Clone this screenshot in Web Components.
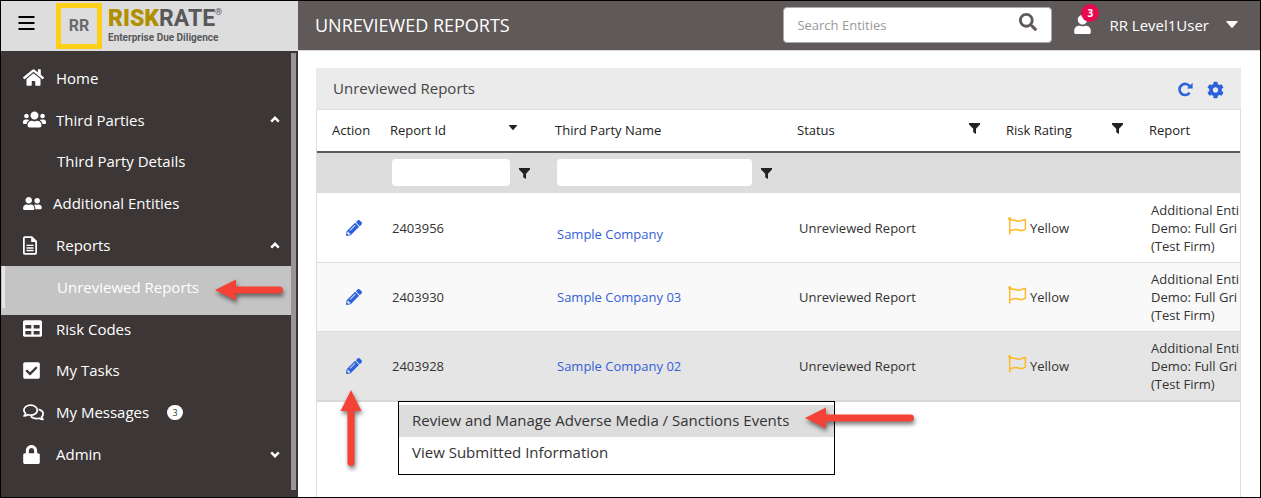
<!DOCTYPE html>
<html lang="en">
<head>
<meta charset="utf-8">
<title>RiskRate – Unreviewed Reports</title>
<style>
html, body { height: 100%; }
body { margin: 0; font-family: "Open Sans", "Noto Sans", sans-serif; font-size: 13px; color: #333; background: #fff; }
</style>
</head>
<body>
<rr-app></rr-app>
<script>
const ICONS = {
  bars: ['0 0 16 14', '<path d="M0 0h16v2H0zM0 6h16v2H0zM0 12h16v2H0z"/>'],
  home: ['0 0 576 512', '<path d="M280.37 148.26L96 300.11V464a16 16 0 0 0 16 16l112.06-.29a16 16 0 0 0 15.92-16V368a16 16 0 0 1 16-16h64a16 16 0 0 1 16 16v95.64a16 16 0 0 0 16 16.05L464 480a16 16 0 0 0 16-16V300L295.67 148.26a12.19 12.19 0 0 0-15.3 0zM571.6 251.47L488 182.56V44.05a12 12 0 0 0-12-12h-56a12 12 0 0 0-12 12v72.61L318.47 43a48 48 0 0 0-61 0L4.34 251.47a12 12 0 0 0-1.6 16.9l25.5 31A12 12 0 0 0 45.15 301l235.22-193.74a12.19 12.19 0 0 1 15.3 0L530.9 301a12 12 0 0 0 16.9-1.6l25.5-31a12 12 0 0 0-1.7-16.93z"/>'],
  users: ['0 0 640 512', '<path d="M96 224c35.3 0 64-28.7 64-64s-28.7-64-64-64-64 28.7-64 64 28.7 64 64 64zm448 0c35.3 0 64-28.7 64-64s-28.7-64-64-64-64 28.7-64 64 28.7 64 64 64zm32 32h-64c-17.6 0-33.5 7.1-45.1 18.6 40.3 22.1 68.9 62 75.1 109.4h66c17.7 0 32-14.3 32-32v-32c0-35.3-28.7-64-64-64zm-256 0c61.9 0 112-50.1 112-112S381.9 32 320 32 208 82.1 208 144s50.1 112 112 112zm76.8 32h-8.3c-20.8 10-43.9 16-68.5 16s-47.6-6-68.5-16h-8.3C179.6 288 128 339.6 128 403.2V432c0 26.5 21.5 48 48 48h288c26.5 0 48-21.5 48-48v-28.8c0-63.6-51.6-115.2-115.2-115.2zm-223.7-13.4C161.5 263.1 145.6 256 128 256H64c-35.3 0-64 28.7-64 64v32c0 17.7 14.3 32 32 32h65.9c6.3-47.4 34.9-87.3 75.2-109.4z"/>'],
  friends: ['0 0 640 512', '<path d="M192 256c61.9 0 112-50.1 112-112S253.9 32 192 32 80 82.1 80 144s50.1 112 112 112zm76.8 32h-8.3c-20.8 10-43.9 16-68.5 16s-47.6-6-68.5-16h-8.3C51.6 288 0 339.6 0 403.2V432c0 26.5 21.5 48 48 48h288c26.5 0 48-21.5 48-48v-28.8c0-63.6-51.6-115.2-115.2-115.2zM480 256c53 0 96-43 96-96s-43-96-96-96-96 43-96 96 43 96 96 96zm48 32h-3.8c-13.9 4.8-28.6 8-44.2 8s-30.3-3.2-44.2-8H432c-20.4 0-39.2 5.9-55.7 15.4 24.4 26.3 39.7 61.2 39.7 99.8v38.4c0 2.2-.5 4.3-.6 6.4H592c26.5 0 48-21.5 48-48 0-61.9-50.1-112-112-112z"/>'],
  file: ['0 0 384 512', '<path d="M24 48q0-24 24-24H240L360 144V464q0 24-24 24H48q-24 0-24-24z" fill="none" stroke="currentColor" stroke-width="48"/><path d="M224 24v136h136v-30L250 20zM96 232h192v40H96zM96 302h192v40H96zM96 372h192v40H96z"/>'],
  table: ['0 0 512 512', '<path d="M464 32H48C21.49 32 0 53.49 0 80v352c0 26.51 21.49 48 48 48h416c26.51 0 48-21.49 48-48V80c0-26.51-21.49-48-48-48zM224 416H64v-96h160v96zm0-160H64v-96h160v96zm224 160H288v-96h160v96zm0-160H288v-96h160v96z"/>'],
  check: ['0 0 448 512', '<path d="M400 480H48c-26.51 0-48-21.49-48-48V80c0-26.51 21.49-48 48-48h352c26.51 0 48 21.49 48 48v352c0 26.51-21.49 48-48 48zm-204.686-98.059l184-184c6.248-6.248 6.248-16.379 0-22.627l-22.627-22.627c-6.248-6.248-16.379-6.249-22.628 0L184 302.745l-70.059-70.059c-6.248-6.248-16.379-6.248-22.628 0l-22.627 22.627c-6.248 6.248-6.248 16.379 0 22.627l104 104c6.249 6.25 16.379 6.25 22.628.001z"/>'],
  chats: ['0 0 576 512', '<g fill="none" stroke="currentColor" stroke-width="48" stroke-linejoin="round"><path d="M208 56c102 0 184 60 184 136s-82 136-184 136c-25 0-49-4-71-11-24 16-58 35-109 35 20-20 36-45 43-70-29-25-47-56-47-90C24 116 106 56 208 56z"/><path d="M430 172c70 20 122 68 122 124 0 32-16 62-44 86 8 26 24 48 42 66-48 0-82-18-106-34-22 6-46 10-70 10-68 0-128-26-160-66"/></g>'],
  lock: ['0 0 448 512', '<path d="M400 224h-24v-72C376 68.2 307.8 0 224 0S72 68.2 72 152v72H48c-26.5 0-48 21.5-48 48v192c0 26.5 21.5 48 48 48h352c26.5 0 48-21.5 48-48V272c0-26.5-21.5-48-48-48zm-104 0H152v-72c0-39.7 32.3-72 72-72s72 32.3 72 72v72z"/>'],
  search: ['0 0 512 512', '<path d="M505 442.7L405.3 343c-4.5-4.5-10.6-7-17-7H372c27.6-35.3 44-79.7 44-128C416 93.1 322.9 0 208 0S0 93.1 0 208s93.1 208 208 208c48.3 0 92.7-16.4 128-44v16.3c0 6.4 2.5 12.5 7 17l99.7 99.7c9.4 9.4 24.6 9.4 33.9 0l28.3-28.3c9.4-9.4 9.4-24.6.1-34zM208 336c-70.7 0-128-57.2-128-128 0-70.7 57.2-128 128-128 70.7 0 128 57.2 128 128 0 70.7-57.2 128-128 128z"/>'],
  user: ['0 0 448 512', '<path d="M224 256c70.7 0 128-57.3 128-128S294.7 0 224 0 96 57.3 96 128s57.3 128 128 128zm89.6 32h-16.7c-22.2 10.2-46.9 16-72.9 16s-50.6-5.8-72.9-16h-16.7C60.2 288 0 348.2 0 422.4V464c0 26.5 21.5 48 48 48h352c26.5 0 48-21.5 48-48v-41.6c0-74.2-60.2-134.4-134.4-134.4z"/>'],
  cog: ['0 0 512 512', '<path d="M487.4 315.7l-42.6-24.6c4.3-23.2 4.3-47 0-70.2l42.6-24.6c4.9-2.8 7.1-8.6 5.5-14-11.1-35.6-30-67.8-54.7-94.6-3.8-4.1-10-5.1-14.8-2.3L380.8 110c-17.9-15.4-38.5-27.3-60.8-35.1V25.8c0-5.6-3.9-10.5-9.4-11.7-36.7-8.2-74.3-7.8-109.2 0-5.5 1.2-9.4 6.1-9.4 11.7V75c-22.2 7.9-42.8 19.8-60.8 35.1L88.7 85.5c-4.9-2.8-11-1.9-14.8 2.3-24.7 26.7-43.6 58.9-54.7 94.6-1.7 5.4.6 11.2 5.5 14L67.3 221c-4.3 23.2-4.3 47 0 70.2l-42.6 24.6c-4.9 2.8-7.1 8.6-5.5 14 11.1 35.6 30 67.8 54.7 94.6 3.8 4.1 10 5.1 14.8 2.3l42.6-24.6c17.9 15.4 38.5 27.3 60.8 35.1v49.2c0 5.6 3.9 10.5 9.4 11.7 36.7 8.2 74.3 7.8 109.2 0 5.5-1.2 9.4-6.1 9.4-11.7v-49.2c22.2-7.9 42.8-19.8 60.8-35.1l42.6 24.6c4.9 2.8 11 1.9 14.8-2.3 24.7-26.7 43.6-58.9 54.7-94.6 1.5-5.5-.7-11.3-5.6-14.1zM256 336c-44.1 0-80-35.9-80-80s35.9-80 80-80 80 35.9 80 80-35.9 80-80 80z"/>'],
  redo: ['0 0 15 15', '<path d="M11.6 10.8A5.6 5.6 0 1 1 11.8 4.4" fill="none" stroke="currentColor" stroke-width="2.6"/><path d="M14.6 0.8V6.6H8.8z"/>'],
  pencil: ['0 0 512 512', '<path d="M497.9 142.1l-46.1 46.1c-4.7 4.7-12.3 4.7-17 0l-111-111c-4.7-4.7-4.7-12.3 0-17l46.1-46.1c18.7-18.7 49.1-18.7 67.9 0l60.1 60.1c18.8 18.7 18.8 49.1 0 67.900zM284.2 99.8L21.6 362.4.4 483.9c-2.9 16.4 11.4 30.6 27.8 27.8l121.5-21.3 262.6-262.6c4.7-4.7 4.7-12.3 0-17l-111-111c-4.8-4.7-12.4-4.7-17.1 0zM124.1 339.9c-5.5-5.5-5.5-14.3 0-19.8l154-154c5.5-5.5 14.3-5.5 19.8 0s5.5 14.3 0 19.8l-154 154c-5.5 5.5-14.3 5.5-19.8 0zM88 424h48v36.3l-64.5 11.3-31.1-31.1L51.7 376H88v48z"/>'],
  filter: ['0 0 11 11', '<path d="M0 0h11v1.5L7 5.8V11L4.2 9.2V5.8L0 1.5z"/>'],
  caret: ['0 0 10 6', '<path d="M.6 0h8.8q.9 0 .3.8L5.6 5.6q-.6.6-1.2 0L.3.8Q-.3 0 .6 0z"/>'],
  up: ['0 0 10 7', '<path d="M1.2 5.6L5 1.8l3.8 3.8" fill="none" stroke="currentColor" stroke-width="2.4"/>'],
  down: ['0 0 10 7', '<path d="M1.2 1.4L5 5.2l3.8-3.8" fill="none" stroke="currentColor" stroke-width="2.4"/>'],
  flag: ['0 0 19 18', '<path d="M1.7 1.4V17.6M1.7 3.4C6 1.6 8 5 12 4Q15 3 17.4 2.6V12.2Q14 14.4 11 13.2C7.5 11.8 5 12.4 1.7 14.2" fill="none" stroke="currentColor" stroke-width="1.5"/><circle cx="1.7" cy="1.7" r="1.6"/>']
};

function define(name, html, setup) {
  const tpl = document.createElement('template');
  tpl.innerHTML = html;
  customElements.define(name, class extends HTMLElement {
    constructor() {
      super();
      this.attachShadow({ mode: 'open' }).append(tpl.content.cloneNode(true));
    }
    connectedCallback() { if (setup) setup(this, this.shadowRoot); }
  });
}

/* Icon: name picks the drawing, --w and --h give its box. */
define('rr-icon', `<style>
:host { display: inline-block; flex: none; width: var(--w, 16px); height: var(--h, 16px); line-height: 0; }
svg { width: 100%; height: 100%; fill: currentColor; display: block; overflow: visible; }
</style><svg aria-hidden="true"></svg>`, (el, root) => {
  const [box, body] = ICONS[el.getAttribute('name')];
  const svg = root.querySelector('svg');
  svg.setAttribute('viewBox', box);
  svg.innerHTML = body;
});

define('rr-logo', `<style>
:host { display: flex; align-items: center; gap: 6px; color: #58585a; }
.mark { box-sizing: border-box; width: 46px; height: 46px; border: 5px solid #fdd017; display: grid; place-items: center; font: bold 16px/20px "Roboto", sans-serif; color: #6a6a6b; }
.words { display: grid; font-family: "Roboto", sans-serif; font-weight: bold; white-space: nowrap; }
.name { font-size: 23px; line-height: 24px; }
.name b { color: #b18f00; }
.name sup { font-size: 9px; line-height: 0; font-weight: normal; vertical-align: 11px; }
.tag { font-size: 10px; line-height: 14px; }
</style>
<span class="mark">RR</span>
<span class="words"><span class="name"><b>RISK</b>RATE<sup>®</sup></span><span class="tag">Enterprise Due Diligence</span></span>`);

define('rr-nav-item', `<style>
:host { display: block; position: relative; }
a { box-sizing: border-box; height: 100%; display: flex; align-items: center; padding: 0 11px 0 22px; color: #fff; text-decoration: none; font-size: 15px; line-height: 20px; white-space: nowrap; }
.ico { width: 33px; display: flex; flex: none; }
:host([tight]) .ico { width: 30px; }
:host([sub]) .ico { width: 34px; }
.tail { margin-left: auto; display: flex; --w: 10px; --h: 7px; }
.count { margin-left: 18px; width: 16px; height: 15px; border-radius: 8px; background: #fff; color: #333; font-size: 9px; line-height: 15px; text-align: center; }
:host([active]) { background: #c4c4c4; box-shadow: 0 7px 0 #c4c4c4; }
:host([active])::before { content: ""; position: absolute; left: 1px; top: 0; bottom: 0; width: 3px; background: #e8e4e4; }
</style>
<a href="#"><span class="ico"></span><span class="label"><slot></slot></span><span class="tail"></span></a>`, (el, root) => {
  const icon = el.getAttribute('icon');
  if (icon) {
    const [w, h] = el.getAttribute('size').split(' ');
    root.querySelector('.ico').innerHTML = `<rr-icon name="${icon}" style="--w:${w}px;--h:${h}px"></rr-icon>`;
  }
  const count = el.getAttribute('count');
  if (count) root.querySelector('.label').insertAdjacentHTML('afterend', `<span class="count">${count}</span>`);
  const arrow = el.getAttribute('arrow');
  if (arrow) root.querySelector('.tail').innerHTML = `<rr-icon name="${arrow}"></rr-icon>`;
});

define('rr-sidebar', `<style>
:host { display: flex; flex-direction: column; background: #3c3736; }
.brand { display: flex; align-items: center; height: 50px; box-sizing: border-box; padding-left: 17px; background: #ddd; gap: 21px; }
button { border: 0; padding: 0; background: none; color: #000; display: flex; margin-bottom: 6px; --w: 17px; --h: 14px; }
.scroll { flex: 1; display: flex; justify-content: space-between; padding: 2px 2px 7px 0; }
nav { flex: 1; display: grid; grid-auto-rows: 1fr; align-self: start; min-height: 418px; padding-top: 4px; }
.bar { width: 5px; background: #999594; }
</style>
<div class="brand"><button aria-label="Menu"><rr-icon name="bars"></rr-icon></button><rr-logo></rr-logo></div>
<div class="scroll">
<nav>
<rr-nav-item icon="home" size="21 19">Home</rr-nav-item>
<rr-nav-item icon="users" size="23 19" arrow="up">Third Parties</rr-nav-item>
<rr-nav-item sub>Third Party Details</rr-nav-item>
<rr-nav-item icon="friends" size="19 15" tight>Additional Entities</rr-nav-item>
<rr-nav-item icon="file" size="14 19" arrow="up">Reports</rr-nav-item>
<rr-nav-item sub active>Unreviewed Reports</rr-nav-item>
<rr-nav-item icon="table" size="19 19">Risk Codes</rr-nav-item>
<rr-nav-item icon="check" size="17 19">My Tasks</rr-nav-item>
<rr-nav-item icon="chats" size="21 19" count="3">My Messages</rr-nav-item>
<rr-nav-item icon="lock" size="17 19" arrow="down">Admin</rr-nav-item>
</nav>
<div class="bar"></div>
</div>`);

define('rr-topbar', `<style>
:host { display: flex; align-items: center; box-sizing: border-box; height: 50px; padding: 0 22px 2px 17px; background: #5f5a59; border-bottom: 1px solid #d8d8d8; color: #fff; }
h1 { margin: 0; flex: 1; font-size: 18px; line-height: 24px; font-weight: normal; white-space: nowrap; }
form { box-sizing: border-box; width: 269px; height: 36px; margin: 0 22px 0 0; display: flex; align-items: center; border: 1px solid #ababab; border-radius: 4px; background: #fff; padding: 0 14px 0 13px; }
input { flex: 1; min-width: 0; border: 0; outline: 0; padding: 0; background: none; font: 13px/20px "Open Sans", sans-serif; color: #333; }
input::placeholder { color: #999; opacity: 1; }
button { border: 0; padding: 0; background: none; color: inherit; font: inherit; display: flex; align-items: center; }
form button { color: #5f5a59; --w: 18px; --h: 18px; margin-bottom: 6px; }
.alerts { position: relative; margin-right: 18px; --w: 17px; --h: 19px; }
.badge { position: absolute; left: 7px; top: -11px; width: 18px; height: 18px; border-radius: 9px; background: #e60a50; font-size: 10px; line-height: 18px; font-weight: bold; text-align: center; }
.user { font-size: 15px; line-height: 20px; gap: 17px; white-space: nowrap; --w: 12px; --h: 7px; }
</style>
<h1><slot></slot></h1>
<form role="search"><input type="text" placeholder="Search Entities" aria-label="Search Entities"><button type="button" aria-label="Search"><rr-icon name="search"></rr-icon></button></form>
<button class="alerts" aria-label="Alerts"><rr-icon name="user"></rr-icon><span class="badge">3</span></button>
<button class="user">RR Level1User<rr-icon name="caret"></rr-icon></button>`);

define('rr-grid', `<style>
:host { display: block; overflow: hidden; }
table { width: 100%; table-layout: fixed; border-collapse: separate; border-spacing: 0; }
th, td { box-sizing: border-box; padding: 0 0 0 17px; text-align: left; font-size: 13px; line-height: 18px; white-space: nowrap; overflow: hidden; }
th { height: 43px; padding: 0 0 2px 15px; font-weight: 500; color: #222; border-bottom: 2px solid #5f5a59; }
.filters td { height: 40px; background: #ddd; padding-bottom: 2px; }
.flex { display: flex; align-items: center; }
.head { justify-content: space-between; padding-right: 22px; color: #222; }
button { border: 0; padding: 0; background: none; color: inherit; display: flex; }
.filters button, .head button { --w: 11px; --h: 11px; color: #222; }
.filters button { margin-top: 2px; }
.head button { margin-bottom: 2px; }
.head.sort button { --w: 10px; --h: 5px; margin-bottom: 4px; }
.risk { padding-right: 11px; }
.flex input { box-sizing: border-box; height: 27px; width: var(--field); border: 0; border-radius: 4px; background: #fff; margin-right: 9px; padding: 0 6px; font: 13px/18px "Open Sans", sans-serif; }
tbody tr:not(.filters) td { height: 70px; border-bottom: 1px solid #ddd; }
tbody tr.alt:not(.filters) td { background: #f9f9f9; height: 69px; }
tbody tr.on:not(.filters) td { background: #e5e5e5; border-bottom: 2px solid #d8d8d8; }
tbody tr:not(.filters) td:first-child { padding-left: 29px; }
td button { color: #2b62dc; --w: 16px; --h: 16px; }
a { color: #3460d8; text-decoration: none; }
.low a { display: block; padding-top: 12px; }
.rate { gap: 3px; }
.rate rr-icon { color: #fdb92a; --w: 19px; --h: 18px; margin-bottom: 4px; }
</style>
<table>
<colgroup><col style="width:58px"><col style="width:165px"><col style="width:242px"><col style="width:209px"><col style="width:143px"><col></colgroup>
<thead><tr>
<th scope="col">Action</th>
<th scope="col"><div class="flex head sort">Report Id<button aria-label="Sort by Report Id"><rr-icon name="caret"></rr-icon></button></div></th>
<th scope="col">Third Party Name</th>
<th scope="col"><div class="flex head risk">Status<button aria-label="Filter Status"><rr-icon name="filter"></rr-icon></button></div></th>
<th scope="col"><div class="flex head risk">Risk Rating<button aria-label="Filter Risk Rating"><rr-icon name="filter"></rr-icon></button></div></th>
<th scope="col">Report</th>
</tr></thead>
<tbody>
<tr class="filters"><td></td>
<td><div class="flex" style="--field:118px"><input type="text" aria-label="Report Id filter"><button aria-label="Filter Report Id"><rr-icon name="filter"></rr-icon></button></div></td>
<td><div class="flex" style="--field:195px"><input type="text" aria-label="Third Party Name filter"><button aria-label="Filter Third Party Name"><rr-icon name="filter"></rr-icon></button></div></td>
<td></td><td></td><td></td></tr>
</tbody>
</table>`, (el, root) => {
  const rows = [
    ['2403956', 'Sample Company', '', 'low'],
    ['2403930', 'Sample Company 03', 'alt', ''],
    ['2403928', 'Sample Company 02', 'on', '']
  ];
  root.querySelector('tbody').insertAdjacentHTML('beforeend', rows.map(([id, name, state, pos]) => `<tr class="${state}">
<td><button aria-label="Edit ${id}"><rr-icon name="pencil"></rr-icon></button></td>
<td>${id}</td><td class="${pos}"><a href="#">${name}</a></td><td>Unreviewed Report</td>
<td><div class="flex rate"><rr-icon name="flag"></rr-icon>Yellow</div></td>
<td>Additional Enti<br>Demo: Full Gri<br>(Test Firm)</td></tr>`).join(''));
});

define('rr-panel', `<style>
:host { display: flex; flex-direction: column; position: relative; }
header { display: flex; align-items: center; justify-content: space-between; height: 41px; padding: 0 17px; background: #ebebeb; }
h2 { margin: 0; padding-bottom: 2px; font-size: 15px; line-height: 20px; font-weight: normal; color: #444; }
.tools { display: flex; align-items: center; gap: 14px; color: #2b62dc; margin-top: 2px; }
button { border: 0; padding: 0; background: none; color: inherit; display: flex; }
.body { flex: 1; border: 1px solid #ddd; border-bottom: 0; }
</style>
<header><h2><slot name="title"></slot></h2><div class="tools">
<button aria-label="Refresh" style="--w:15px;--h:15px"><rr-icon name="redo"></rr-icon></button>
<button aria-label="Settings" style="--w:17px;--h:18px"><rr-icon name="cog"></rr-icon></button></div></header>
<div class="body"><slot></slot></div>`);

define('rr-menu', `<style>
:host { display: block; box-sizing: border-box; background: #fff; border: 1px solid #000; padding: 3px 0 5px; }
button { display: block; width: 100%; border: 0; padding: 5px 13px 7px; background: none; text-align: left; font: 15px/20px "Open Sans", sans-serif; color: #333; white-space: nowrap; }
button:first-of-type { background: #ddd; }
</style>
<button role="menuitem">Review and Manage Adverse Media / Sanctions Events</button>
<button role="menuitem">View Submitted Information</button>`);

/* Callout arrow: length gives the shaft, up turns it from left to upwards. */
define('rr-arrow', `<style>
:host { display: block; pointer-events: none; filter: drop-shadow(1px 3px 2px rgba(0,0,0,.5)); line-height: 0; }
svg { display: block; }
</style><svg aria-hidden="true"></svg>`, (el, root) => {
  const n = +el.getAttribute('length'), up = el.hasAttribute('up');
  const svg = root.querySelector('svg');
  svg.setAttribute('width', up ? 22 : n);
  svg.setAttribute('height', up ? n : 22);
  const d = up
    ? `M11 0L21.5 21H14.5V${n - 3.5}a3.5 3.5 0 0 1-7 0V21H.5z`
    : `M0 11L21 .5V7.5H${n - 3.5}a3.5 3.5 0 0 1 0 7H21V21.5z`;
  svg.innerHTML = `<path d="${d}" fill="#f44336"/>`;
});

define('rr-app', `<style>
:host { display: grid; grid-template-columns: 297px minmax(0, 1fr); box-sizing: border-box; min-height: 100%; border: 1px solid #000; position: relative; overflow: hidden; }
main { display: flex; flex-direction: column; min-width: 0; }
rr-panel { flex: 1; margin: 17px 19px 0 18px; }
rr-menu { position: absolute; left: 82px; top: 333px; width: 437px; }
rr-arrow { position: absolute; }
.a1 { left: 214px; top: 278px; }
.a2 { left: 24px; top: 322px; }
.a3 { left: 489px; top: 339px; }
</style>
<rr-sidebar></rr-sidebar>
<main>
<rr-topbar>UNREVIEWED REPORTS</rr-topbar>
<rr-panel><span slot="title">Unreviewed Reports</span><rr-grid></rr-grid>
<rr-menu role="menu"></rr-menu>
<rr-arrow class="a2" length="76" up></rr-arrow>
<rr-arrow class="a3" length="109"></rr-arrow>
</rr-panel>
</main>
<rr-arrow class="a1" length="68"></rr-arrow>`);
</script>
</body>
</html>
